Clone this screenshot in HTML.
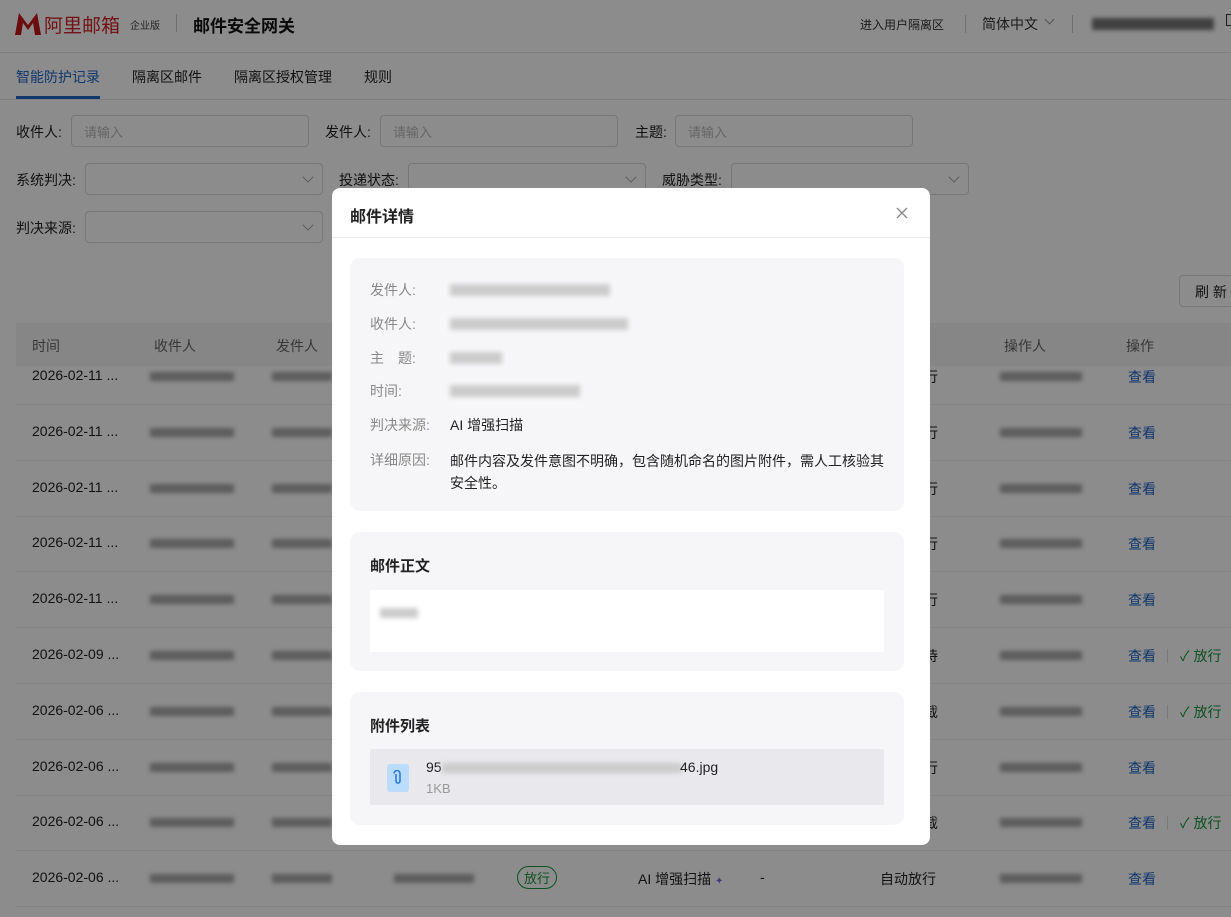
<!DOCTYPE html>
<html><head><meta charset="utf-8">
<style>
*{margin:0;padding:0;box-sizing:border-box}
body{width:1231px;height:917px;overflow:hidden;background:#fff;font-family:"Liberation Sans","Noto Sans CJK SC",sans-serif;color:#222;font-size:14px;position:relative}
.a{position:absolute;white-space:nowrap}
.bl{position:absolute;background:#aaa;filter:blur(2px);height:9px}
.inp{position:absolute;border:1px solid #d9d9d9;border-radius:4px;height:32px;background:#fff;color:#bbb;font-size:13px;padding:6px 12px}
.chev{position:absolute;right:10px;top:9px;width:8px;height:8px;border-right:1px solid #aaa;border-bottom:1px solid #aaa;transform:rotate(45deg)}
.lnk{color:#1f64c8}
.ok{color:#16943c}
.rowline{position:absolute;left:16px;right:0;height:1px;background:#eee}
#ov{position:absolute;inset:0;background:rgba(0,0,0,0.45)}
.modal{position:absolute;left:332px;top:188px;width:598px;height:657px;background:#fff;border-radius:8px}
.card{position:absolute;left:18px;width:554px;background:#f6f6f8;border-radius:10px}
.lb{position:absolute;left:20px;color:#888;font-size:14px}
.vb{position:absolute;left:100px;font-size:14px;color:#222}
.mb{position:absolute;background:#ccc;filter:blur(2.5px);height:12px}
</style></head><body>
<svg class="a" style="left:14px;top:12px" width="28" height="24" viewBox="0 0 28 24"><path d="M1 23 L5 1 L14 13 L23 1 L27 23 L21 23 L19 11 L14 18 L9 11 L7 23Z" fill="#c4161c"/></svg>
<div class="a" style="left:44px;top:11px;font-size:19px;color:#d2232a">阿里邮箱</div>
<div class="a" style="left:130px;top:17px;font-size:10px;color:#444">企业版</div>
<div class="a" style="left:176px;top:14px;width:1px;height:18px;background:#ccc"></div>
<div class="a" style="left:193px;top:12px;font-size:17px;font-weight:bold;color:#111">邮件安全网关</div>
<div class="a" style="left:860px;top:16px;font-size:12px;color:#333">进入用户隔离区</div>
<div class="a" style="left:965px;top:15px;width:1px;height:18px;background:#ccc"></div>
<div class="a" style="left:982px;top:14px;font-size:14px;color:#333">简体中文</div>
<div class="a" style="left:1046px;top:16px;width:7px;height:7px;border-right:1px solid #999;border-bottom:1px solid #999;transform:rotate(45deg)"></div>
<div class="a" style="left:1072px;top:15px;width:1px;height:18px;background:#ccc"></div>
<div class="bl" style="left:1092px;top:18px;width:122px;height:12px;background:#777"></div>
<div class="a" style="left:1226px;top:14px;width:8px;height:12px;border:1px solid #333"></div>
<div class="a" style="left:0;top:52px;width:1231px;height:1px;background:#e5e5e5"></div>
<div class="a" style="left:16px;top:67px;font-size:14px;color:#1f64c8">智能防护记录</div>
<div class="a" style="left:16px;top:96px;width:84px;height:3px;background:#1f64c8"></div>
<div class="a" style="left:132px;top:67px;font-size:14px">隔离区邮件</div>
<div class="a" style="left:234px;top:67px;font-size:14px">隔离区授权管理</div>
<div class="a" style="left:364px;top:67px;font-size:14px">规则</div>
<div class="a" style="left:0;top:99px;width:1231px;height:1px;background:#e5e5e5"></div>
<div class="a" style="left:16px;top:122px">收件人:</div><div class="inp" style="left:71px;top:115px;width:238px">请输入</div>
<div class="a" style="left:325px;top:122px">发件人:</div><div class="inp" style="left:380px;top:115px;width:238px">请输入</div>
<div class="a" style="left:635px;top:122px">主题:</div><div class="inp" style="left:675px;top:115px;width:238px">请输入</div>
<div class="a" style="left:16px;top:170px">系统判决:</div><div class="inp" style="left:85px;top:163px;width:238px"><span class="chev"></span></div>
<div class="a" style="left:339px;top:170px">投递状态:</div><div class="inp" style="left:408px;top:163px;width:238px"><span class="chev"></span></div>
<div class="a" style="left:662px;top:170px">威胁类型:</div><div class="inp" style="left:731px;top:163px;width:238px"><span class="chev"></span></div>
<div class="a" style="left:16px;top:218px">判决来源:</div><div class="inp" style="left:85px;top:211px;width:238px"><span class="chev"></span></div>
<div class="inp" style="left:1179px;top:275px;width:70px;color:#222;font-size:14px;padding-left:15px">刷 新</div>
<div class="a" style="left:16px;top:323px;width:1215px;height:43px;background:#f4f4f5"></div>
<div class="a" style="left:32px;top:336px;color:#666">时间</div>
<div class="a" style="left:154px;top:336px;color:#666">收件人</div>
<div class="a" style="left:276px;top:336px;color:#666">发件人</div>
<div class="a" style="left:1004px;top:336px;color:#666">操作人</div>
<div class="a" style="left:1126px;top:336px;color:#666">操作</div>
<div id="rows"></div>
<script>
var d=["2026-02-11 ...","2026-02-11 ...","2026-02-11 ...","2026-02-11 ...","2026-02-11 ...","2026-02-09 ...","2026-02-06 ...","2026-02-06 ...","2026-02-06 ...","2026-02-06 ..."];
var st=["放行","放行","放行","放行","放行","待","拦截","放行","拦截","自动放行"];
var h="";
for(var i=0;i<10;i++){var y=367+i*55.8;
h+='<div class="a" style="left:32px;top:'+y+'px">'+d[i]+'</div>';
h+='<div class="bl" style="left:150px;top:'+(y+5)+'px;width:84px"></div>';
h+='<div class="bl" style="left:272px;top:'+(y+5)+'px;width:60px"></div>';
h+='<div class="a" style="left:'+(i==9?880:924)+'px;top:'+y+'px">'+(i==9?st[i]:st[i].slice(-1))+'</div>';
h+='<div class="bl" style="left:1000px;top:'+(y+5)+'px;width:82px"></div>';
h+='<div class="a lnk" style="left:1128px;top:'+y+'px">查看</div>';
if(i==5||i==6||i==8)h+='<div class="a" style="left:1167px;top:'+(y+3)+'px;width:1px;height:14px;background:#ddd"></div><div class="a ok" style="left:1180px;top:'+y+'px">✓ 放行</div>';
h+='<div class="rowline" style="top:'+(y+37)+'px"></div>';}
document.getElementById('rows').innerHTML=h;
</script>
<div class="bl" style="left:394px;top:874px;width:80px"></div>
<div class="a" style="left:517px;top:866px;border:1px solid #16943c;border-radius:12px;color:#16943c;font-size:13px;padding:1px 6px">放行</div>
<div class="a" style="left:638px;top:869px">AI 增强扫描 <span style="color:#7a6ad8;font-size:10px">✦</span></div>
<div class="a" style="left:760px;top:869px">-</div>
<div id="ov"></div>
<div class="modal">
<div class="a" style="left:18px;top:15px;font-size:16px;font-weight:bold;color:#222">邮件详情</div>
<svg class="a" style="left:564px;top:19px" width="12" height="12" viewBox="0 0 12 12"><path d="M1 1L11 11M11 1L1 11" stroke="#888" stroke-width="1.3"/></svg>
<div class="a" style="left:0;top:49px;width:598px;height:1px;background:#ebebeb"></div>
<div class="card" style="top:70px;height:253px">
<div class="lb" style="top:22px">发件人:</div><div class="mb" style="left:100px;top:26px;width:160px"></div>
<div class="lb" style="top:56px">收件人:</div><div class="mb" style="left:100px;top:60px;width:178px"></div>
<div class="lb" style="top:90px">主　题:</div><div class="mb" style="left:100px;top:94px;width:52px"></div>
<div class="lb" style="top:123px">时间:</div><div class="mb" style="left:100px;top:127px;width:130px"></div>
<div class="lb" style="top:157px">判决来源:</div><div class="vb" style="top:157px">AI 增强扫描</div>
<div class="lb" style="top:192px">详细原因:</div><div class="vb" style="top:192px;width:440px;white-space:normal;line-height:22px">邮件内容及发件意图不明确，包含随机命名的图片附件，需人工核验其安全性。</div>
</div>
<div class="card" style="top:344px;height:139px">
<div class="a" style="left:20px;top:23px;font-size:15px;font-weight:bold">邮件正文</div>
<div class="a" style="left:20px;top:58px;width:514px;height:62px;background:#fff"></div>
<div class="mb" style="left:30px;top:76px;width:38px;height:10px"></div>
</div>
<div class="card" style="top:504px;height:133px">
<div class="a" style="left:20px;top:23px;font-size:15px;font-weight:bold">附件列表</div>
<div class="a" style="left:20px;top:57px;width:514px;height:56px;background:#e9e9ed;border-radius:2px"></div>
<div class="a" style="left:37px;top:72px;width:22px;height:28px;background:#bcdcfc;border-radius:3px"></div>
<svg class="a" style="left:41px;top:78px" width="14" height="16" viewBox="0 0 14 16"><path d="M5 4 V11 a2 2 0 0 0 4 0 V3.5 a3 3 0 0 0 -6 0" fill="none" stroke="#2a7ae2" stroke-width="1.6"/></svg>
<div class="a" style="left:76px;top:67px;font-size:14px">95</div>
<div class="mb" style="left:92px;top:71px;width:240px;height:10px"></div>
<div class="a" style="left:330px;top:67px;font-size:14px">46.jpg</div>
<div class="a" style="left:76px;top:89px;font-size:13px;color:#999">1KB</div>
</div>
</div>
</body></html>
